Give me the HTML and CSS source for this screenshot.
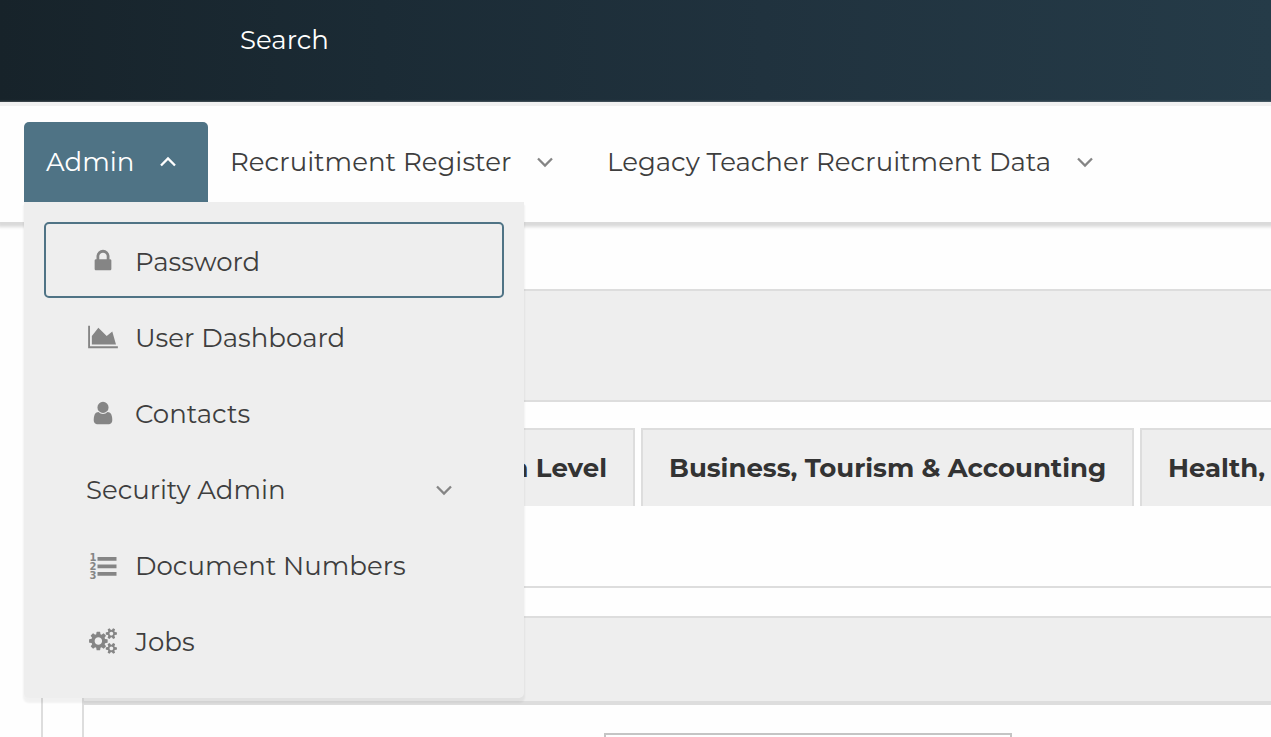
FILE: index.html
```html
<!DOCTYPE html>
<html lang="en">
<head>
<meta charset="utf-8">
<title>Admin</title>
<link rel="stylesheet" href="styles.css">
</head>
<body>
<header class="topbar"><a class="search">Search</a></header>
<nav class="nav">
  <div class="nav-item nav-admin"><span>Admin</span><svg class="chev" viewBox="0 0 18 12"><path d="M2 9.500 9 2.500l7 7"/></svg>
    <div class="menu">
      <a class="item focused"><svg class="icon" viewBox="-448 0 2048 1792"><path d="M320 768h512v-192q0-106-75-181t-181-75-181 75-75 181v192zm832 96v576q0 40-28 68t-68 28h-960q-40 0-68-28t-28-68v-576q0-40 28-68t68-28h32v-192q0-184 132-316t316-132 316 132 132 316v192h32q40 0 68 28t28 68z"/></svg><span>Password</span></a>
      <a class="item"><svg class="icon" viewBox="0 0 2048 1792"><path d="M2048 1536v128h-2048v-1536h128v1408h1920zm-384-1024l256 896h-1664v-576l448-576 576 576z"/></svg><span>User Dashboard</span></a>
      <a class="item"><svg class="icon" viewBox="-384 0 2048 1792"><path d="M1280 1399q0 109-62.5 187t-150.5 78h-854q-88 0-150.5-78t-62.5-187q0-85 8.5-160.5t31.5-152 58.5-131 94-89 134.5-34.5q131 128 313 128t313-128q76 0 134.5 34.5t94 89 58.5 131 31.5 152 8.5 160.5zm-256-887q0 159-112.5 271.5t-271.5 112.5-271.5-112.5-112.5-271.5 112.5-271.5 271.5-112.5 271.5 112.5 112.5 271.5z"/></svg><span>Contacts</span></a>
      <a class="item"><span>Security Admin</span><svg class="chev chev-end" viewBox="0 0 18 12"><path d="M2 2.500 9 9.500l7-7"/></svg></a>
      <a class="item"><svg class="icon" viewBox="0 0 30 26"><path d="M9.500 5h19v3.700h-19zM9.500 12.500h19v3.700h-19zM9.500 20h19v3.700h-19z"/><text class="digit" x="1.500" y="8.500">1</text><text class="digit" x="1.500" y="17.700">2</text><text class="digit" x="1.500" y="26.700">3</text></svg><span>Document Numbers</span></a>
      <a class="item"><svg class="icon" viewBox="-64 0 2048 1792"><path d="M896 896q0-106-75-181t-181-75-181 75-75 181 75 181 181 75 181-75 75-181zm768 512q0-52-38-90t-90-38-90 38-38 90q0 53 37.5 90.5t90.5 37.5 90.5-37.5 37.5-90.5zm0-1024q0-52-38-90t-90-38-90 38-38 90q0 53 37.5 90.5t90.5 37.5 90.5-37.5 37.5-90.5zm-384 421v185q0 10-7 19.5t-16 10.5l-155 24q-11 35-32 76 34 48 90 115 7 11 7 20 0 12-7 19-23 30-82.5 89.5t-78.5 59.5q-11 0-21-7l-115-90q-37 19-77 31-11 108-23 155-7 24-30 24h-186q-11 0-20-7.5t-10-17.5l-23-153q-34-10-75-31l-118 89q-7 7-20 7-11 0-21-8-144-133-144-160 0-9 7-19 10-14 41-53t47-61q-23-44-35-82l-152-24q-10-1-17-9.500t-7-19.500v-185q0-10 7-19.500t16-10.500l155-24q11-35 32-76-34-48-90-115-7-11-7-20 0-12 7-20 22-30 82-89t79-59q11 0 21 7l115 90q34-18 77-32 11-108 23-154 7-24 30-24h186q11 0 20 7.500t10 17.500l23 153q34 10 75 31l118-89q8-7 20-7 11 0 21 8 144 133 144 160 0 8-7 19-12 16-42 54t-45 60q23 48 34 82l152 23q10 2 17 10.500t7 19.500zm640 533v140q0 16-149 31-12 27-30 52 51 113 51 138 0 4-4 7-122 71-124 71-8 0-46-47t-52-68q-20 2-30 2t-30-2q-14 21-52 68t-46 47q-2 0-124-71-4-3-4-7 0-25 51-138-18-25-30-52-149-15-149-31v-140q0-16 149-31 13-29 30-52-51-113-51-138 0-4 4-7 4-2 35-20t59-34 30-16q8 0 46 46.500t52 67.500q20-2 30-2t30 2q51-71 92-112l6-2q4 0 124 70 4 3 4 7 0 25-51 138 17 23 30 52 149 15 149 31zm0-1024v140q0 16-149 31-12 27-30 52 51 113 51 138 0 4-4 7-122 71-124 71-8 0-46-47t-52-68q-20 2-30 2t-30-2q-14 21-52 68t-46 47q-2 0-124-71-4-3-4-7 0-25 51-138-18-25-30-52-149-15-149-31v-140q0-16 149-31 13-29 30-52-51-113-51-138 0-4 4-7 4-2 35-20t59-34 30-16q8 0 46 46.500t52 67.500q20-2 30-2t30 2q51-71 92-112l6-2q4 0 124 70 4 3 4 7 0 25-51 138 17 23 30 52 149 15 149 31z"/></svg><span>Jobs</span></a>
    </div>
  </div>
  <div class="nav-item nav-register"><span>Recruitment Register</span><svg class="chev" viewBox="0 0 18 12"><path d="M2 2.500 9 9.500l7-7"/></svg></div>
  <div class="nav-item"><span>Legacy Teacher Recruitment Data</span><svg class="chev" viewBox="0 0 18 12"><path d="M2 2.500 9 9.500l7-7"/></svg></div>
</nav>
<main class="page">
  <div class="outer">
    <section class="band"></section>
    <div class="tabs">
      <div class="tab tab-first">n Level</div>
      <div class="tab tab-business">Business, Tourism &amp; Accounting</div>
      <div class="tab tab-health">Health,</div>
    </div>
    <div class="rule"></div>
    <section class="panel">
      <div class="panel-head"></div>
      <div class="panel-body"><div class="field"></div></div>
    </section>
  </div>
</main>
</body>
</html>
```
FILE: styles.css
```css
* { box-sizing: border-box; }
body {
  margin: 0;
  height: 737px;
  overflow: hidden;
  background: #fefefe;
  color: #333;
  font: 400 26px/30px Montserrat, Inter, sans-serif;
  white-space: nowrap;
}
.topbar {
  height: 102px;
  padding: 25px 0 0 240px;
  color: #fff;
  background: linear-gradient(90deg, #17232a 0%, #1b2b35 30%, #20323e 60%, #253b48 100%);
}
.search { display: flex; }
.nav {
  display: flex;
  height: 120px;
  padding: 20px 24px 0;
  color: #3e3e3e;
  letter-spacing: .03px;
  background: #fefefe;
  box-shadow: inset 0 4px 0 #f1f1f1, 0 3px 3px 2px #dadada;
}
.nav-item {
  display: flex;
  align-items: center;
  height: 80px;
  padding-left: 22px;
}
.nav-admin {
  position: relative;
  width: 184px;
  color: #fff;
  background: #4f7385;
  border-radius: 5px 5px 0 0;
}
.nav-register { width: 377px; }
.chev {
  width: 18px;
  height: 12px;
  margin-left: 25px;
  fill: none;
  stroke: #858585;
  stroke-width: 2.300;
}
.nav-admin > .chev { stroke: #fff; }
.menu {
  position: absolute;
  top: 80px;
  left: 0;
  z-index: 2;
  width: 500px;
  padding: 20px;
  color: #3e3e3e;
  letter-spacing: 0;
  background: #eee;
  border-radius: 0 0 5px 5px;
  box-shadow: 0 4px 2px 1px rgba(0, 0, 0, .05);
}
.item {
  display: flex;
  align-items: center;
  height: 76px;
  padding: 3px 49px 0 40px;
  border: 2px solid transparent;
  border-radius: 5px;
}
.focused { border-color: #4f7385; }
.icon {
  flex: none;
  width: 30px;
  height: 26px;
  margin: -1px 17px 0 2px;
  fill: #858585;
  overflow: visible;
}
.digit { font: 700 10px "DejaVu Sans", sans-serif; }
.chev-end { margin-left: auto; }
.page { padding-left: 41px; }
.outer { border-left: 2px solid #ddd; padding: 67px 0 0 39px; }
.band {
  height: 113px;
  background: #eee;
  border: solid #ddd;
  border-width: 2px 0;
}
.tabs { display: flex; gap: 6px; padding-top: 26px; font-weight: 700; }
.tab {
  display: flex;
  flex: none;
  align-items: center;
  height: 78px;
  padding-left: 26px;
  background: #eee;
  border: 2px solid #ddd;
  border-bottom: 0;
}
.tab-first { width: 553px; justify-content: flex-end; padding-right: 26px; }
.tab-business { width: 493px; }
.tab-health { flex: 1; border-right: 0; min-width: 0; }
.rule { height: 82px; border-bottom: 2px solid #ddd; }
.panel { margin-top: 28px; border: solid #ddd; border-width: 2px 0 0 2px; }
.panel-head { height: 87px; background: #eee; border-bottom: 4px solid #ddd; }
.panel-body { padding: 28px 0 0 520px; }
.field { width: 408px; height: 40px; border: 2px solid #c4c4c4; }
```
